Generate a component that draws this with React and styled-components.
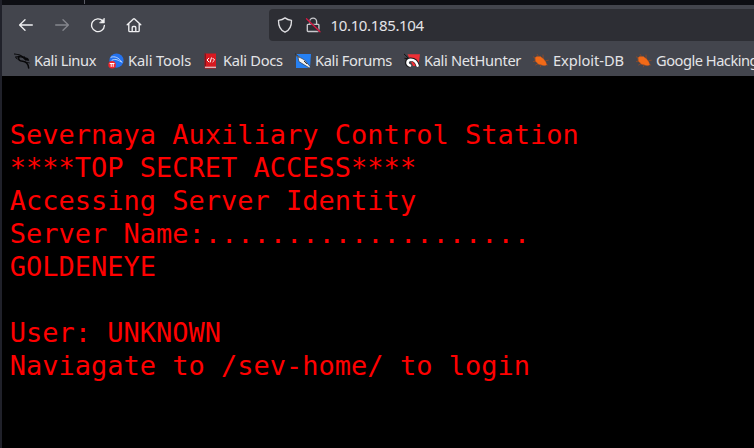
import React from 'react';
import styled, { createGlobalStyle } from 'styled-components';

const Global = createGlobalStyle`
  * { box-sizing: border-box; }
  html, body { margin: 0; background: #000; overflow: hidden; }
`;
const Window = styled.div`
  width: 754px;
  height: 448px;
  display: flex;
  flex-direction: column;
  overflow: hidden;
  background: #000;
  border-left: 2px solid #20212a;
  font-family: "Noto Sans", sans-serif;
  color: #e4e4e7;
`;
const TabStrip = styled.div`
  flex: 0 0 5px;
  background: #0d0e13;
  display: flex;
`;
const TabSeparator = styled.div`
  width: 1px;
  height: 4px;
  margin-left: 82px;
  background: #5b5c65;
`;
const Toolbar = styled.div`
  flex: 0 0 40px;
  background: #43454d;
  display: flex;
  align-items: center;
`;
const NavButtons = styled.div`
  width: 267px;
  padding-left: 16px;
  display: flex;
  gap: 20px;
  svg { display: block; }
`;
const AddressBar = styled.div`
  flex: 1;
  height: 32px;
  background: #2d2e34;
  border-radius: 4px 0 0 4px;
  display: flex;
  align-items: center;
  padding-left: 8px;
  gap: 12px;
  font-size: 15px;
  letter-spacing: -0.35px;
  svg { display: block; }
`;
const Url = styled.span`
  margin-left: -2.5px;
  line-height: 20px;
`;
const Bookmarks = styled.div`
  flex: 0 0 31px;
  background: #43454d;
  display: flex;
  align-items: flex-start;
  padding: 8px 0 0 12px;
`;
const Bookmark = styled.div`
  flex: 0 0 ${(p) => p.$width}px;
  display: flex;
  align-items: center;
  gap: 4px;
  height: 16px;
  font-size: 14.67px;
  line-height: 20px;
  white-space: nowrap;
  letter-spacing: ${(p) => p.$spacing}px;
  svg { flex: 0 0 16px; display: block; }
`;
const Label = styled.span`
  margin-top: -2px;
`;
const Page = styled.pre`
  flex: 1;
  margin: 0;
  padding: 42px 8px 0 7.75px;
  font: 27px/33px "DejaVu Sans Mono", monospace;
  color: #f00;
`;

const Icon = ({ size = 16, children, ...rest }) => (
  <svg width={size} height={size} viewBox="0 0 16 16" fill="none" stroke="#f0f0f2"
    strokeWidth="1.35" strokeLinecap="round" strokeLinejoin="round" {...rest}>
    {children}
  </svg>
);
const BackIcon = () => <Icon><path d="M14.3 8H1.8M7 2.8 1.6 8 7 13.2" /></Icon>;
const ForwardIcon = () => <Icon stroke="#85868d"><path d="M1.7 8h12.5M9 2.8 14.4 8 9 13.2" /></Icon>;
const ReloadIcon = () => (
  <Icon>
    <path d="M12.8 4A6.4 6.4 0 1 0 14.4 8.5" />
    <path d="M14.3 1.5v4.4H9.9z" fill="#f0f0f2" strokeWidth=".7" />
  </Icon>
);
const HomeIcon = () => (
  <Icon><path d="m1.2 7.8 6.2-5.9q.6-.5 1.2 0l6.2 5.9M2.8 6.8v6.6q0 1.2 1.2 1.2h8q1.2 0 1.2-1.2V6.8M6.2 14.4v-4q0-.9.9-.9h1.8q.9 0 .9.9v4" /></Icon>
);
const ShieldIcon = () => (
  <Icon stroke="#dedee1"><path d="M8 .9c2 1.6 4.2 2.2 6.5 2.5.1 5-.9 9.3-6.5 11.8C2.4 12.7 1.4 8.4 1.5 3.4 3.8 3.1 6 2.5 8 .9z" /></Icon>
);
const InsecureIcon = () => (
  <Icon>
    <path d="M4.6 7V4.6a3.5 3.5 0 0 1 7 0V7M3.2 7.3h9.9q.8 0 .8.8v5.6q0 .8-.8.8H3.1q-.8 0-.8-.8V8.1q0-.8.9-.8z" stroke="#c9c9cd" />
    <path d="m1.5 1.8 13.5 12.9" stroke="#2d2e34" strokeWidth="2.6" opacity=".6" />
    <path d="m1.5 1.8 13.5 12.9" stroke="#dd1744" strokeWidth="1.3" />
  </Icon>
);
const Dragon = () => (
  <Icon stroke="#08080a" strokeWidth="1.2">
    <path d="M.5 1c4 .3 6.6 1 8.3 3M1.6 4.1c3-.7 5-.7 7.1.2" />
    <path d="M5.1 3.4C3.6 6.6 5.5 8 8.7 8.3c4 .4 5.5 2.6 6 6.7" strokeWidth="1.5" />
    <path d="m8.3 4 2.2-.2 1 .9 2.5.9.7 1.9-1.8-.4-1.5.1-1.5-1.6z" fill="#08080a" strokeWidth=".8" />
    <path d="M2.2 5.4 5 6.6M11 9.1l4.4.8" strokeWidth=".8" />
  </Icon>
);
const ToolsIcon = () => (
  <Icon stroke="none">
    <circle cx="8.5" cy="7.6" r="7.1" fill="#2472ee" />
    <path d="M3 4.2C7 2.8 10.6 4.8 13.4 8.4M4 7.2c4-2.2 6.5.5 10 2" stroke="#c6dcff" strokeWidth=".9" />
    <circle cx="4.1" cy="11.8" r="3.8" fill="#ef252d" />
    <path d="M2.1 10.5h4M3.2 10.5v3M5.2 10.5v3" stroke="#fff" strokeWidth="1" />
  </Icon>
);
const DocsIcon = () => (
  <Icon stroke="none">
    <path d="M1.7.5H13v15H1.7z" fill="#d71920" />
    <path d="M1.7.5h1.2v12.8H1.7z" fill="#81131c" />
    <path d="M2 13.7h11v1.1H2z" fill="#dedce0" />
    <path d="M5.8 5.2 4 7l1.8 1.8M9.8 5.2 11.6 7 9.8 8.8M8.4 4.9 7.2 9.1" stroke="#fff" strokeWidth="1" />
  </Icon>
);
const ForumsIcon = () => (
  <Icon stroke="none">
    <path d="M1 1h15l-1 14H1z" fill="#2680f2" />
    <path d="m.2.8 5 3.8 4.4 2.4 5.8 6.9-1 1-5.2-3.1-5.3-3.3-.6-3z" fill="#f4f4f4" stroke="#20242c" strokeWidth=".6" />
    <path d="m.5 1 3.7 3.8M9.2 8.2l2.5 2.6" stroke="#333" strokeWidth="1" />
  </Icon>
);
const NetHunterIcon = () => (
  <Icon stroke="none">
    <path d="M3.5 1.2H16L14.3 13H9z" fill="#ee3036" />
    <path d="M.3 1.2 3.8 4.6M.8 5.3l2.8.3" stroke="#111" strokeWidth="1" />
    <path d="M6 12.8C1.5 11.4 2.4 6.6 6.8 6.4c3.7 0 6.2 3 7 6.6" stroke="#181719" strokeWidth="4" strokeLinecap="butt" />
    <path d="M6 12.5C2.3 11.2 2.9 7 6.8 6.8c3.6 0 5.9 2.8 6.8 5.8" stroke="#fff" strokeWidth="2.6" />
  </Icon>
);
const BugIcon = () => (
  <Icon stroke="#9c4a20" strokeWidth=".7">
    <path d="M.2 3.8 5 6M.4 8.6l5-1.2M4.2 1.4l2 3M10 2l.2 4.1M15.4 7.2l-4.4.9M14.8 12.2l-4-3M6.5 10 2.6 12M8.4 11l-1 2.8" />
    <path d="M2.2 4.8 3.8 3.6l2 .2 1.5-.4 1.6 1.4 1.7 1.2 1 1.6 1.2 1.4.8 3-2 .6-2-.3-1.8-.7-2.2-.3-1.4-1.5-1.6-1.5z" fill="#f26a17" stroke="#df5e17" strokeWidth=".4" />
  </Icon>
);

const bookmarks = [
  { label: 'Kali Linux', icon: Dragon, width: 94, spacing: -0.4 },
  { label: 'Kali Tools', icon: ToolsIcon, width: 95, spacing: -0.12 },
  { label: 'Kali Docs', icon: DocsIcon, width: 92, spacing: -0.27 },
  { label: 'Kali Forums', icon: ForumsIcon, width: 109, spacing: -0.36 },
  { label: 'Kali NetHunter', icon: NetHunterIcon, width: 129, spacing: -0.35 },
  { label: 'Exploit-DB', icon: BugIcon, width: 103, spacing: -0.05 },
  { label: 'Google Hacking DB', icon: BugIcon, width: 145, spacing: -0.5 },
];

const message = `Severnaya Auxiliary Control Station
****TOP SECRET ACCESS****
Accessing Server Identity
Server Name:....................
GOLDENEYE

User: UNKNOWN
Naviagate to /sev-home/ to login`;

export default function App() {
  return (
    <Window>
      <Global />
      <TabStrip><TabSeparator /></TabStrip>
      <Toolbar>
        <NavButtons><BackIcon /><ForwardIcon /><ReloadIcon /><HomeIcon /></NavButtons>
        <AddressBar><ShieldIcon /><InsecureIcon /><Url>10.10.185.104</Url></AddressBar>
      </Toolbar>
      <Bookmarks>
        {bookmarks.map(({ label, icon: Glyph, width, spacing }) => (
          <Bookmark key={label} $width={width} $spacing={spacing}><Glyph /><Label>{label}</Label></Bookmark>
        ))}
      </Bookmarks>
      <Page>{message}</Page>
    </Window>
  );
}
